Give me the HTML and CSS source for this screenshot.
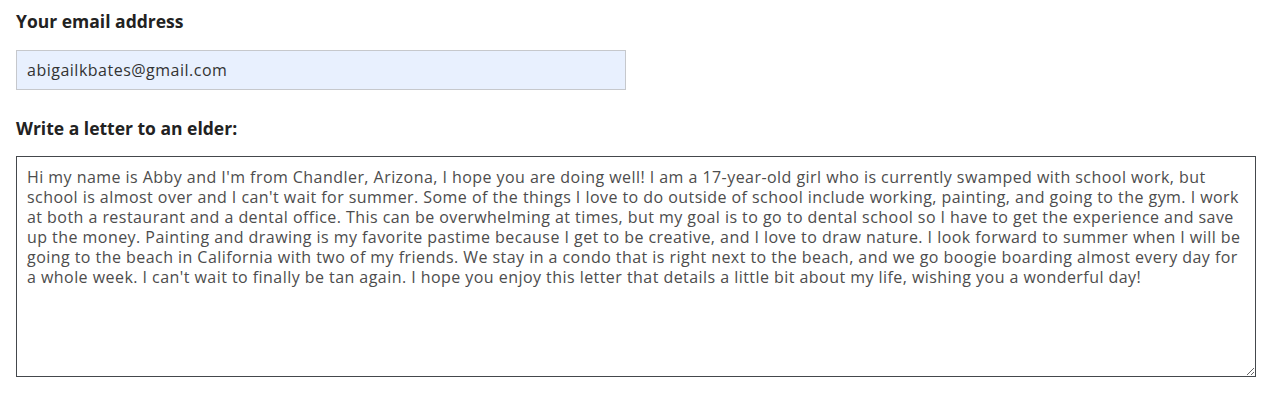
FILE: index.html
```html
<!DOCTYPE html>
<html>
<head>
<meta charset="utf-8">
<link rel="stylesheet" href="styles.css">
</head>
<body>
<form class="form">
  <label class="field">
    <span class="label">Your email address</span>
    <input class="email" type="text" value="abigailkbates@gmail.com">
  </label>
  <label class="field">
    <span class="label">Write a letter to an elder:</span>
    <textarea class="letter">Hi my name is Abby and I'm from Chandler, Arizona, I hope you are doing well! I am a 17-year-old girl who is currently swamped with school work, but school is almost over and I can't wait for summer. Some of the things I love to do outside of school include working, painting, and going to the gym. I work at both a restaurant and a dental office. This can be overwhelming at times, but my goal is to go to dental school so I have to get the experience and save up the money. Painting and drawing is my favorite pastime because I get to be creative, and I love to draw nature. I look forward to summer when I will be going to the beach in California with two of my friends. We stay in a condo that is right next to the beach, and we go boogie boarding almost every day for a whole week. I can't wait to finally be tan again. I hope you enjoy this letter that details a little bit about my life, wishing you a wonderful day!</textarea>
  </label>
</form>
</body>
</html>
```
FILE: styles.css
```css
html, body {
  margin: 0;
  padding: 0;
  background: #ffffff;
}
body {
  font-family: "Open Sans", "Lato", sans-serif;
}
.form {
  display: flex;
  flex-direction: column;
  padding: 10px 24px 0 16px;
}
.field {
  display: flex;
  flex-direction: column;
}
.label {
  font-family: "Open Sans", sans-serif;
  font-weight: 700;
  font-size: 17.5px;
  line-height: 22px;
  color: #222222;
}
.email {
  margin: 18px 0 27px 0;
  width: 610px;
  height: 40px;
  box-sizing: border-box;
  border: 1px solid #c6c8cc;
  background: #e8f0fe;
  padding: 0 10px;
  font-family: "Open Sans", sans-serif;
  font-size: 16px;
  letter-spacing: 0.5px;
  color: #333333;
  outline: none;
}
.letter {
  margin-top: 17px;
  width: 1240px;
  height: 221px;
  box-sizing: border-box;
  border: 1px solid #44484c;
  padding: 10px 10px 10px 10px;
  font-family: "Open Sans", sans-serif;
  font-size: 16px;
  letter-spacing: 0.45px;
  line-height: 20px;
  color: #4d4d4d;
  resize: both;
  outline: none;
}
```
